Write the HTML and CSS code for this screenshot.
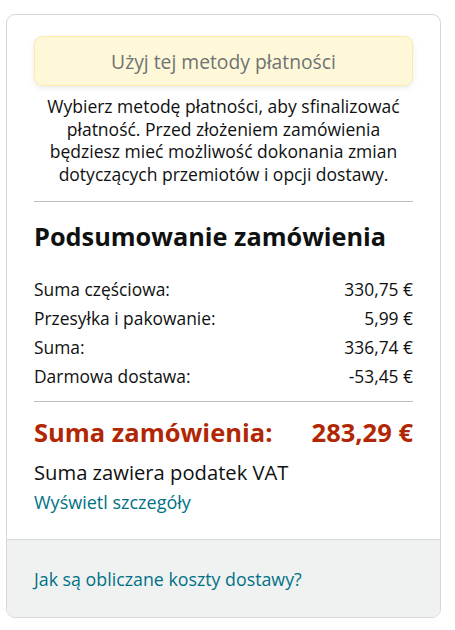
FILE: index.html
```html
<!DOCTYPE html>
<html lang="pl">
<head>
    <meta charset="UTF-8">
    <meta name="viewport" content="width=device-width, initial-scale=1.0">
    <title>Podsumowanie zamówienia</title>
    <link rel="stylesheet" href="styles.css">
</head>
<body>
    <div class="card">
        <div class="card-body">
            <button class="pay-button" disabled>Użyj tej metody płatności</button>
            <p class="note">Wybierz metodę płatności, aby sfinalizować płatność. Przed złożeniem zamówienia będziesz mieć możliwość dokonania zmian dotyczących przemiotów i opcji dostawy.</p>

            <hr class="divider">

            <h2 class="summary-title">Podsumowanie zamówienia</h2>

            <ul class="summary-rows">
                <li><span>Suma częściowa:</span><span>330,75 €</span></li>
                <li><span>Przesyłka i pakowanie:</span><span>5,99 €</span></li>
                <li><span>Suma:</span><span>336,74 €</span></li>
                <li><span>Darmowa dostawa:</span><span>-53,45 €</span></li>
            </ul>

            <hr class="divider divider-tight">

            <div class="order-total">
                <span>Suma zamówienia:</span>
                <span>283,29 €</span>
            </div>
            <div class="vat">Suma zawiera podatek VAT</div>
            <a class="link" href="#">Wyświetl szczegóły</a>
        </div>
        <div class="card-footer">
            <a class="link" href="#">Jak są obliczane koszty dostawy?</a>
        </div>
    </div>
</body>
</html>
```

FILE: styles.css
```css
body {
    margin: 0;
    font-family: "Open Sans", Arial, sans-serif;
    color: #0f1111;
    background-color: #fff;
}
.card {
    margin: 14px 14px 0 6px;
    border: 1px solid #d5d9d9;
    border-radius: 9px;
    overflow: hidden;
}
.card-body {
    padding: 21px 27px 25px;
}
.pay-button {
    display: block;
    width: 100%;
    height: 50px;
    padding: 0;
    font-family: inherit;
    font-size: 19.3px;
    color: #6f7373;
    background-color: #fef8d9;
    border: 1px solid #fbeaa9;
    border-radius: 8px;
    box-shadow: 0 2px 5px rgba(213, 217, 217, 0.5);
}
.note {
    margin: 9px 0 0;
    padding: 0 6px;
    font-size: 17.5px;
    line-height: 22.5px;
    text-align: center;
}
.divider {
    height: 1px;
    margin: 16px 0 0;
    border: none;
    background-color: #bbbfbf;
}
.summary-title {
    margin: 18px 0 0;
    font-size: 25.3px;
    line-height: 32px;
    font-weight: 700;
}
.summary-rows {
    list-style: none;
    margin: 23px 0 0;
    padding: 0;
}
.summary-rows li {
    display: flex;
    justify-content: space-between;
    font-size: 17.4px;
    line-height: 29px;
}
.divider-tight {
    margin-top: 10px;
}
.order-total {
    display: flex;
    justify-content: space-between;
    margin-top: 14px;
    font-size: 25.5px;
    line-height: 32px;
    font-weight: 700;
    color: #b12704;
}
.vat {
    margin-top: 11px;
    font-size: 20.2px;
    line-height: 26px;
}
.link {
    display: block;
    margin-top: 5px;
    font-size: 18px;
    line-height: 24px;
    color: #007185;
    text-decoration: none;
}
.card-footer {
    height: 78px;
    padding: 27px 27px 0;
    box-sizing: border-box;
    background-color: #f0f2f2;
    border-top: 1px solid #d5d9d9;
}
.card-footer .link {
    margin: 0;
    font-size: 17.8px;
}
```
